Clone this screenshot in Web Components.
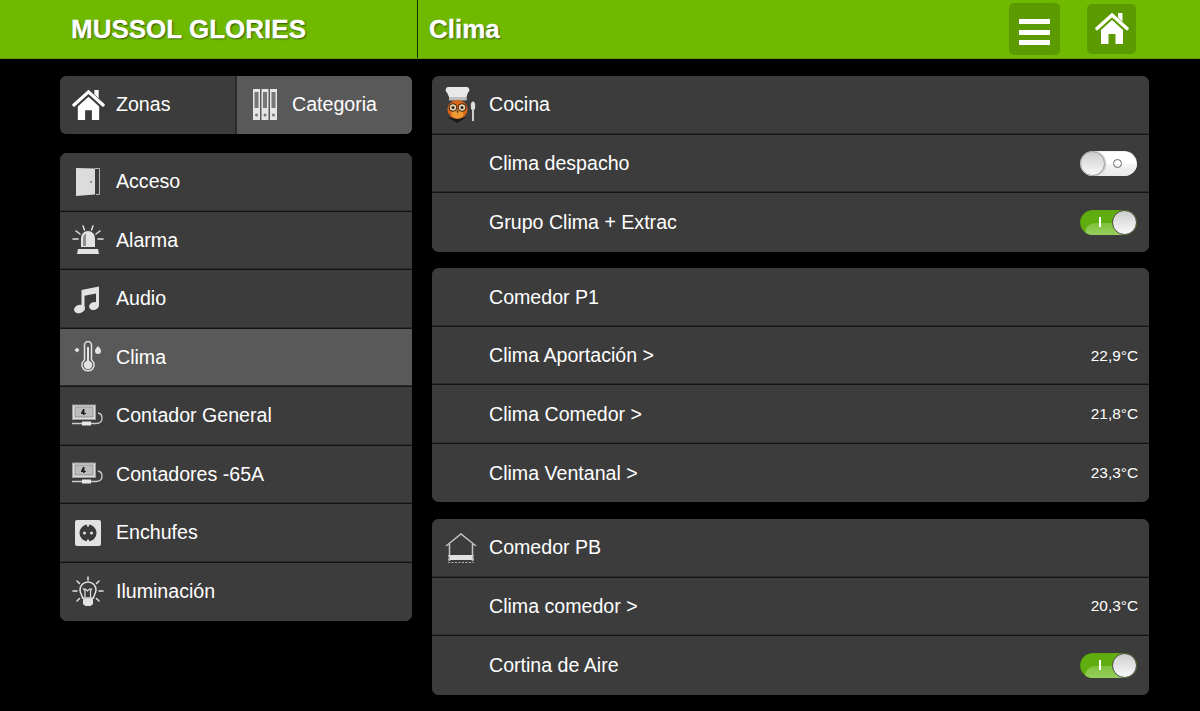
<!DOCTYPE html>
<html lang="es">
<head>
<meta charset="utf-8">
<title>Clima</title>
<style>
  html, body { margin: 0; height: 711px; overflow: hidden; background: #000; }
  body { font-family: "Liberation Sans", Arial, sans-serif; color: #fff; }
</style>
</head>
<body>
<app-shell>
  <top-bar slot="top" brand="MUSSOL GLORIES" heading="Clima"></top-bar>

  <div slot="left" style="display:contents">
    <tab-pair></tab-pair>
    <list-card>
      <list-row label="Acceso"><svg slot="icon" width="28" height="30" viewBox="0 0 28 30"><path fill="#dcdcdc" d="M2 1l19 .5v26L2 29z"/><path fill="none" stroke="#b5b5b5" d="M21 1.500h4.500v26H22"/><circle cx="17" cy="15" r="1" fill="#777"/></svg></list-row>
      <list-row label="Alarma"><svg slot="icon" width="32" height="30" viewBox="0 0 32 30"><path fill="#e2e2e2" d="M9 22v-9a7 7 0 0 1 14 0v9z"/><path fill="#8f8f8f" d="M11 21v-8a5 5 0 0 1 3-4.500V21z"/><path fill="#e2e2e2" d="M6 24h20l1 5H5z"/><path stroke="#e2e2e2" stroke-width="1.500" stroke-linecap="round" d="M1 14h5M26 14h5M4 6l4 3M28 6l-4 3M11 1l1.500 4M21 1l-1.500 4"/></svg></list-row>
      <list-row label="Audio"><svg slot="icon" width="30" height="30" viewBox="0 0 30 30"><path fill="#e2e2e2" d="M8.500 6 26 2.500v18.800h-3V9.500L11.500 11.800V25h-3z"/><ellipse cx="6.500" cy="25" rx="5.500" ry="4.200" fill="#e2e2e2" transform="rotate(-15 6.500 25)"/><ellipse cx="21" cy="22" rx="5" ry="4" fill="#e2e2e2" transform="rotate(-15 21 22)"/></svg></list-row>
      <list-row label="Clima" active><svg slot="icon" width="30" height="32" viewBox="0 0 30 32"><path fill="none" stroke="#e2e2e2" stroke-width="1.500" d="M11.500 19V4a3.500 3.500 0 0 1 7 0v15a6 6 0 1 1-7 0z"/><circle cx="15" cy="24" r="4.200" fill="#e2e2e2"/><rect x="14" y="6" width="2" height="16" fill="#e2e2e2"/><path fill="#e2e2e2" d="M4 6.500l2.500 2.500L4 11.500 1.500 9zM25 5c2.500 2.500 3 3.500 3 5a3 3 0 0 1-6 0c0-1.500.5-2.500 3-5z"/></svg></list-row>
      <list-row label="Contador General"><meter-icon slot="icon"></meter-icon></list-row>
      <list-row label="Contadores -65A"><meter-icon slot="icon"></meter-icon></list-row>
      <list-row label="Enchufes"><svg slot="icon" width="28" height="28" viewBox="0 0 28 28"><rect x="1" y="1" width="26" height="26" rx="2" fill="#e2e2e2"/><circle cx="14" cy="14" r="8.500" fill="#3a3a3a"/><circle cx="10.500" cy="14" r="1.500" fill="#e2e2e2"/><circle cx="17.500" cy="14" r="1.500" fill="#e2e2e2"/><rect x="13" y="4.500" width="2" height="3" fill="#e2e2e2"/><rect x="13" y="20.500" width="2" height="3" fill="#e2e2e2"/></svg></list-row>
      <list-row label="Iluminación"><svg slot="icon" width="32" height="32" viewBox="0 0 32 32"><path fill="none" stroke="#e2e2e2" stroke-width="1.500" d="M10.500 22c0-3-2.500-4-2.500-8a8 8 0 0 1 16 0c0 4-2.500 5-2.500 8z"/><path fill="none" stroke="#e2e2e2" stroke-width="1.200" d="M13 21v-6l-1.500-2h2l2 2 2-2h2L18.500 15v6"/><path fill="#e2e2e2" d="M11 22.500h10V28l-2.500 2h-5L11 28z"/><path stroke="#e2e2e2" stroke-width="1.500" stroke-linecap="round" d="M16 1v3M1 15h4M27 15h4M5 5l2.500 2.500M27 5l-2.500 2.500M5 25l2.500-2.500M27 25l-2.500-2.500"/></svg></list-row>
    </list-card>
  </div>

  <div slot="right" style="display:contents">
    <list-card>
      <list-row label="Cocina" wide><svg slot="icon" width="34" height="36" viewBox="0 0 34 36"><path fill="#e8e8e8" d="M5 0h17a3 3 0 0 1 2 5.500l-1.500 4.500v3H5v-3L3 5.500A3 3 0 0 1 5 0z"/><path fill="#bdbdbd" d="M5 10h17.500v3.500H5z"/><path fill="#1e1a16" d="M3 30l10 6 10-6-10 2z"/><ellipse cx="13.500" cy="22.500" rx="10" ry="9.500" fill="#d8641a"/><ellipse cx="13.500" cy="27" rx="6" ry="4.500" fill="#f09a34"/><circle cx="9" cy="20.500" r="3.800" fill="#efd9b0" stroke="#3a1d08"/><circle cx="18" cy="20.500" r="3.800" fill="#efd9b0" stroke="#3a1d08"/><circle cx="9" cy="20.500" r="1.500" fill="#222"/><circle cx="18" cy="20.500" r="1.500" fill="#222"/><path fill="#222" d="M12.500 23.500h2l-1 3z"/><ellipse cx="29" cy="19" rx="2.200" ry="4.500" fill="#ddd"/><rect x="28" y="22" width="2" height="12" fill="#ccc"/></svg></list-row>
      <list-row label="Clima despacho" wide><toggle-switch slot="end"></toggle-switch></list-row>
      <list-row label="Grupo Clima + Extrac" wide><toggle-switch slot="end" on></toggle-switch></list-row>
    </list-card>
    <list-card>
      <list-row label="Comedor P1" wide></list-row>
      <list-row label="Clima Aportación &gt;" wide value="22,9°C"></list-row>
      <list-row label="Clima Comedor &gt;" wide value="21,8°C"></list-row>
      <list-row label="Clima Ventanal &gt;" wide value="23,3°C"></list-row>
    </list-card>
    <list-card>
      <list-row label="Comedor PB" wide><svg slot="icon" width="32" height="32" viewBox="0 0 32 32"><path fill="none" stroke="#c4c4c4" stroke-width="1.500" d="M1 14 16 2l15 12M4.500 12v17M27.500 12v17"/><rect x="5" y="23" width="22" height="5" fill="#e2e2e2"/><path fill="none" stroke="#b5b5b5" stroke-dasharray="2 1.500" d="M3.500 23v7.500h25V23"/></svg></list-row>
      <list-row label="Clima comedor &gt;" wide value="20,3°C"></list-row>
      <list-row label="Cortina de Aire" wide><toggle-switch slot="end" on></toggle-switch></list-row>
    </list-card>
  </div>
</app-shell>

<script>
class AppShell extends HTMLElement {
  constructor() {
    super();
    this.attachShadow({ mode: 'open' });
    this.shadowRoot.innerHTML = `
      <style>
        :host { display: block; width: 1200px; height: 711px; }
        .cols { display: grid; grid-template-columns: 352px 717px; column-gap: 20px; padding: 17px 0 0 60px; }
        .col { display: flex; flex-direction: column; }
        .col.left { gap: 19px; }
        .col.right { gap: 16.75px; }
      </style>
      <slot name="top"></slot>
      <div class="cols">
        <div class="col left"><slot name="left"></slot></div>
        <div class="col right"><slot name="right"></slot></div>
      </div>
    `;
  }
}

class HouseIcon extends HTMLElement {
  constructor() {
    super();
    this.attachShadow({ mode: 'open' });
    const size = this.getAttribute('size') || 34;
    this.shadowRoot.innerHTML = `
      <style>:host { display: block; line-height: 0; }</style>
      <svg width="${size}" height="${size}" viewBox="0 0 34 34">
        <path fill="#fff" d="M23 2h4.500v8.500L23 6.500z"/>
        <path fill="none" stroke="#fff" stroke-width="3.400" stroke-linecap="round" d="M2 17.500 17 4l15 13.500"/>
        <path fill="#fff" d="M6 19 17 9l11 10v14h-7.500V23h-7v10H6z"/>
      </svg>
    `;
  }
}

class MeterIcon extends HTMLElement {
  constructor() {
    super();
    this.attachShadow({ mode: 'open' });
    this.shadowRoot.innerHTML = `
      <style>:host { display: block; line-height: 0; }</style>
      <svg width="32" height="24" viewBox="0 0 32 24">
        <rect x="0.500" y="1" width="23" height="14.500" fill="#dcdcdc" stroke="#9a9a9a"/>
        <rect x="3" y="3" width="18" height="10" fill="#bcbcbc" stroke="#777" stroke-width=".6"/>
        <path fill="#222" d="M11 5h1.500v6H11zM9 9l2-4v4h3v1H9z"/>
        <path fill="none" stroke="#ccc" stroke-width="1.300" d="M0 19.500h24c4 0 6-1.500 6-5.500 0-3-1-4.500-4-5"/>
        <rect x="10" y="17.500" width="9" height="4" fill="#e6e6e6"/>
      </svg>
    `;
  }
}

class TopBar extends HTMLElement {
  constructor() {
    super();
    this.attachShadow({ mode: 'open' });
    this.shadowRoot.innerHTML = `
      <style>
        :host { display: flex; height: 59px; box-sizing: border-box; background: #6fba00; border-bottom: 1px solid #5f9e00; }
        .brand, .heading { font-weight: bold; font-size: 26px; -webkit-text-stroke: .3px #fff; text-shadow: 1px 1px 2px rgba(0,0,0,.6); display: flex; align-items: center; }
        .brand { width: 418px; box-sizing: border-box; padding: 0 0 0 71px; border-right: 1px solid #1c2a00; }
        .heading { flex: 1; padding: 0 0 0 11px; }
        .btn { background: #5b9a00; border-radius: 5px; display: flex; align-items: center; justify-content: center; }
        .menu { width: 51px; height: 52px; margin: 3px 0 0 0; padding-top: 6px; box-sizing: border-box; }
        .home { width: 49px; height: 50px; margin: 4px 64px 0 27px; padding-bottom: 3px; box-sizing: border-box; }
        .bars { display: flex; flex-direction: column; gap: 5.500px; }
        .bars i { display: block; width: 31px; height: 5px; background: #fff; }
      </style>
      <div class="brand"></div>
      <div class="heading"></div>
      <div class="btn menu"><div class="bars"><i></i><i></i><i></i></div></div>
      <div class="btn home"><house-icon></house-icon></div>
    `;
  }

  connectedCallback() {
    this.shadowRoot.querySelector('.brand').textContent = this.getAttribute('brand');
    this.shadowRoot.querySelector('.heading').textContent = this.getAttribute('heading');
  }
}

class TabPair extends HTMLElement {
  constructor() {
    super();
    this.attachShadow({ mode: 'open' });
    this.shadowRoot.innerHTML = `
      <style>
        :host { display: flex; height: 58px; border-radius: 6px; overflow: hidden; font-size: 19.600px; background: #3c3c3c; }
        .tab { display: flex; align-items: center; padding-bottom: 1px; box-sizing: border-box; width: 175px; }
        .tab + .tab { flex: 1; background: #595959; border-left: 2px solid #2a2a2a; }
        .ico { width: 56px; display: flex; justify-content: center; flex: none; }
        .tab + .tab .ico { width: 55px; }
      </style>
      <div class="tab"><span class="ico"><house-icon size="33"></house-icon></span>Zonas</div>
      <div class="tab"><span class="ico"><svg width="24" height="31" viewBox="0 0 24 31"><g fill="#e4e4e4"><rect width="7" height="31"/><rect x="8.500" width="7" height="31"/><rect x="17" width="7" height="31"/></g><g fill="#777"><rect x="1.500" y="3" width="4" height="16"/><rect x="10" y="3" width="4" height="16"/><rect x="18.500" y="3" width="4" height="16"/><circle cx="3.500" cy="26" r="1.500"/><circle cx="12" cy="26" r="1.500"/><circle cx="20.500" cy="26" r="1.500"/></g></svg></span>Categoria</div>
    `;
  }
}

class ListCard extends HTMLElement {
  constructor() {
    super();
    this.attachShadow({ mode: 'open' });
    this.shadowRoot.innerHTML = `
      <style>
        :host { display: block; border-radius: 7px; overflow: hidden; background: #3c3c3c; }
      </style>
      <slot></slot>
    `;
  }
}

class ListRow extends HTMLElement {
  constructor() {
    super();
    this.attachShadow({ mode: 'open' });
    this.shadowRoot.innerHTML = `
      <style>
        :host { display: flex; align-items: center; height: 58.500px; box-sizing: border-box; background: #3c3c3c; font-size: 19.600px; border-bottom: 1px solid #141414; box-shadow: inset 0 -1px 0 #2c2c2c; }
        :host(:last-child) { border-bottom: 0; box-shadow: none; }
        :host([active]) { background: #595959; }
        .ico { flex: none; width: 56px; display: flex; justify-content: center; }
        .label { flex: 1; white-space: nowrap; }
        .value { font-size: 15.400px; padding-right: 11px; }
        .end { display: flex; }
        ::slotted(toggle-switch) { margin-right: 12px; }
      </style>
      <span class="ico"><slot name="icon"></slot></span>
      <span class="label"></span>
      <span class="value"></span>
      <span class="end"><slot name="end"></slot></span>
    `;
  }

  connectedCallback() {
    this.shadowRoot.querySelector('.label').textContent = this.getAttribute('label');
    const value = this.getAttribute('value');
    const box = this.shadowRoot.querySelector('.value');
    if (value) box.textContent = value;
    else box.remove();
    if (this.hasAttribute('wide')) {
      this.shadowRoot.querySelector('.ico').style.width = '57px';
    }
  }
}

class ToggleSwitch extends HTMLElement {
  constructor() {
    super();
    this.attachShadow({ mode: 'open' });
    this.shadowRoot.innerHTML = `
      <style>
        :host { display: block; position: relative; width: 57px; height: 25px; border-radius: 13px; overflow: hidden; background: #fff; box-shadow: inset 0 0 1px rgba(0,0,0,.5); }
        :host([on]) { background: #60ad10; }
        .gloss { position: absolute; left: 6px; right: -8px; top: 13px; height: 20px; border-radius: 10px 10px 0 0; background: linear-gradient(#f4f4f4, #e0e0e0); }
        :host([on]) .gloss { left: 5px; right: 10px; background: linear-gradient(#7fc13c, #a7d873); }
        .knob { position: absolute; top: 0; left: 0; width: 25px; height: 25px; box-sizing: border-box; border-radius: 50%; background: linear-gradient(#cdcdcd, #fafafa); border: 1px solid #999; box-shadow: 1px 0 1px rgba(0,0,0,.25); }
        :host([on]) .knob { left: 32px; border-color: #4a4a4a; box-shadow: none; }
        .mark { position: absolute; top: 8px; left: 33px; width: 9px; height: 9px; box-sizing: border-box; border: 1px solid #666; border-radius: 50%; }
        :host([on]) .mark { top: 7px; left: 19px; width: 1.500px; height: 10px; background: #fff; border: 0; border-radius: 0; }
      </style>
      <span class="gloss"></span>
      <span class="mark"></span>
      <span class="knob"></span>
    `;
  }
}

customElements.define('house-icon', HouseIcon);
customElements.define('meter-icon', MeterIcon);
customElements.define('app-shell', AppShell);
customElements.define('top-bar', TopBar);
customElements.define('tab-pair', TabPair);
customElements.define('list-card', ListCard);
customElements.define('list-row', ListRow);
customElements.define('toggle-switch', ToggleSwitch);
</script>
</body>
</html>
